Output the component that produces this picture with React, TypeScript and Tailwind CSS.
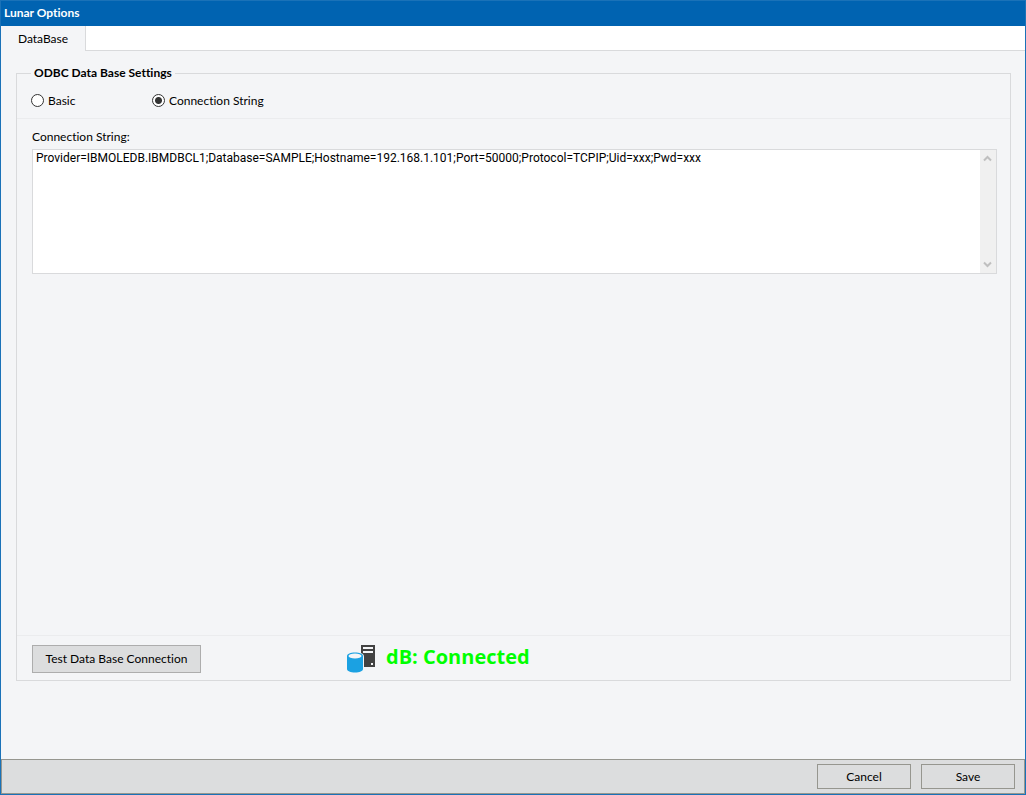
import { useState } from 'react'

const CONNECTION_STRING =
    'Provider=IBMOLEDB.IBMDBCL1;Database=SAMPLE;Hostname=192.168.1.101;Port=50000;Protocol=TCPIP;Uid=xxx;Pwd=xxx'

const radioClass =
    'appearance-none size-[13px] shrink-0 rounded-full border border-[#333333] bg-white checked:bg-[radial-gradient(circle,#333333_3px,#ffffff_4px)]'

function DatabaseIcon() {
    return (
        <svg width="30" height="30" viewBox="0 0 30 30" aria-hidden="true" className="shrink-0">
            <path d="M15 1h14v22H15z" fill="#424242" />
            <path d="M17 3h10v2H17zM17 7h10v2H17zM25 19h2v2h-2z" fill="#f4f5f7" />
            <path d="M0 12.5C0 9.5 4 8 9 8s9 1.500 9 4.500V24H0z" fill="#f4f5f7" />
            <path d="M1 12c0-2 3.500-3.500 8-3.500s8 1.500 8 3.500v13c0 2-3.500 3.500-8 3.500S1 27 1 25z" fill="#1ba1e2" />
            <ellipse cx="9" cy="12" rx="6.500" ry="2.500" fill="#f4f5f7" />
        </svg>
    )
}

function ScrollTrack() {
    return (
        <div className="flex w-4 shrink-0 flex-col justify-between bg-[#f0f0f0] py-[5px] text-[#bfbfbf]" aria-hidden="true">
            <svg width="16" height="7" viewBox="0 0 16 7" fill="none" stroke="currentColor" strokeWidth="2">
                <path d="M4 5.500L7.500 2L11 5.500" />
            </svg>
            <svg width="16" height="7" viewBox="0 0 16 7" fill="none" stroke="currentColor" strokeWidth="2">
                <path d="M4 1.500L7.500 5L11 1.500" />
            </svg>
        </div>
    )
}

export default function App() {
    const [mode, setMode] = useState('string')
    const [value, setValue] = useState(CONNECTION_STRING)

    return (
        <div className="flex h-screen flex-col border border-[#1a72b8] bg-[#f4f5f7] font-['Lato','Open_Sans',sans-serif] text-xs text-black [font-variant-ligatures:none]">
            <header className="bg-[#0063b1] px-[3px] text-white">
                <h1 className="pb-px leading-6 font-bold">Lunar Options</h1>
            </header>

            <div className="flex h-[25px] shrink-0" role="tablist">
                <button role="tab" aria-selected="true" className="w-[85px] border-r border-[#d9dadc]">
                    DataBase
                </button>
                <div className="flex-1 border-b border-[#d9dadc] bg-white" />
            </div>

            <main className="flex flex-1 flex-col pt-3 pr-[14px] pb-[78px] pl-[15px]">
                <fieldset className="flex flex-1 flex-col border border-[#d9dadc]">
                    <legend className="ml-[14px] px-[3px] leading-5 font-bold">ODBC Data Base Settings</legend>

                    <div className="flex h-9 shrink-0 items-center border-b border-[#ebecee] pl-[14px]">
                        <label className="flex w-[121px] items-center gap-1">
                            <input
                                type="radio"
                                name="mode"
                                className={radioClass}
                                checked={mode === 'basic'}
                                onChange={() => setMode('basic')}
                            />
                            Basic
                        </label>
                        <label className="flex items-center gap-1">
                            <input
                                type="radio"
                                name="mode"
                                className={radioClass}
                                checked={mode === 'string'}
                                onChange={() => setMode('string')}
                            />
                            Connection String
                        </label>
                    </div>

                    <div className="flex flex-1 flex-col pt-[10px] pr-[13px] pl-[15px]">
                        <label htmlFor="connection" className="leading-4">
                            Connection String:
                        </label>
                        <div className="mt-1 flex h-[125px] border border-[#d9dadc] bg-white">
                            <textarea
                                id="connection"
                                className="flex-1 resize-none px-[3px] font-['Roboto',sans-serif] leading-4 outline-none"
                                spellCheck={false}
                                value={value}
                                onChange={(e) => setValue(e.target.value)}
                            />
                            <ScrollTrack />
                        </div>
                    </div>

                    <div className="flex h-[45px] shrink-0 items-center border-t border-[#ebecee] pt-px pl-[15px]">
                        <button className="h-7 w-[169px] border border-[#adadad] bg-[#dcddde]">Test Data Base Connection</button>
                        <div className="ml-[145px] flex items-center gap-[10px]">
                            <DatabaseIcon />
                            <output className="pb-[3px] font-['Open_Sans',sans-serif] text-xl leading-6 font-bold text-[#00ff00]">
                                dB: Connected
                            </output>
                        </div>
                    </div>
                </fieldset>
            </main>

            <footer className="flex h-[35px] shrink-0 items-center justify-end gap-[10px] border border-[#96968f] bg-[#dcddde] pr-[9px]">
                <button className="h-[25px] w-[94px] border border-[#96968f]">Cancel</button>
                <button className="h-[25px] w-[94px] border border-[#96968f]">Save</button>
            </footer>
        </div>
    )
}
